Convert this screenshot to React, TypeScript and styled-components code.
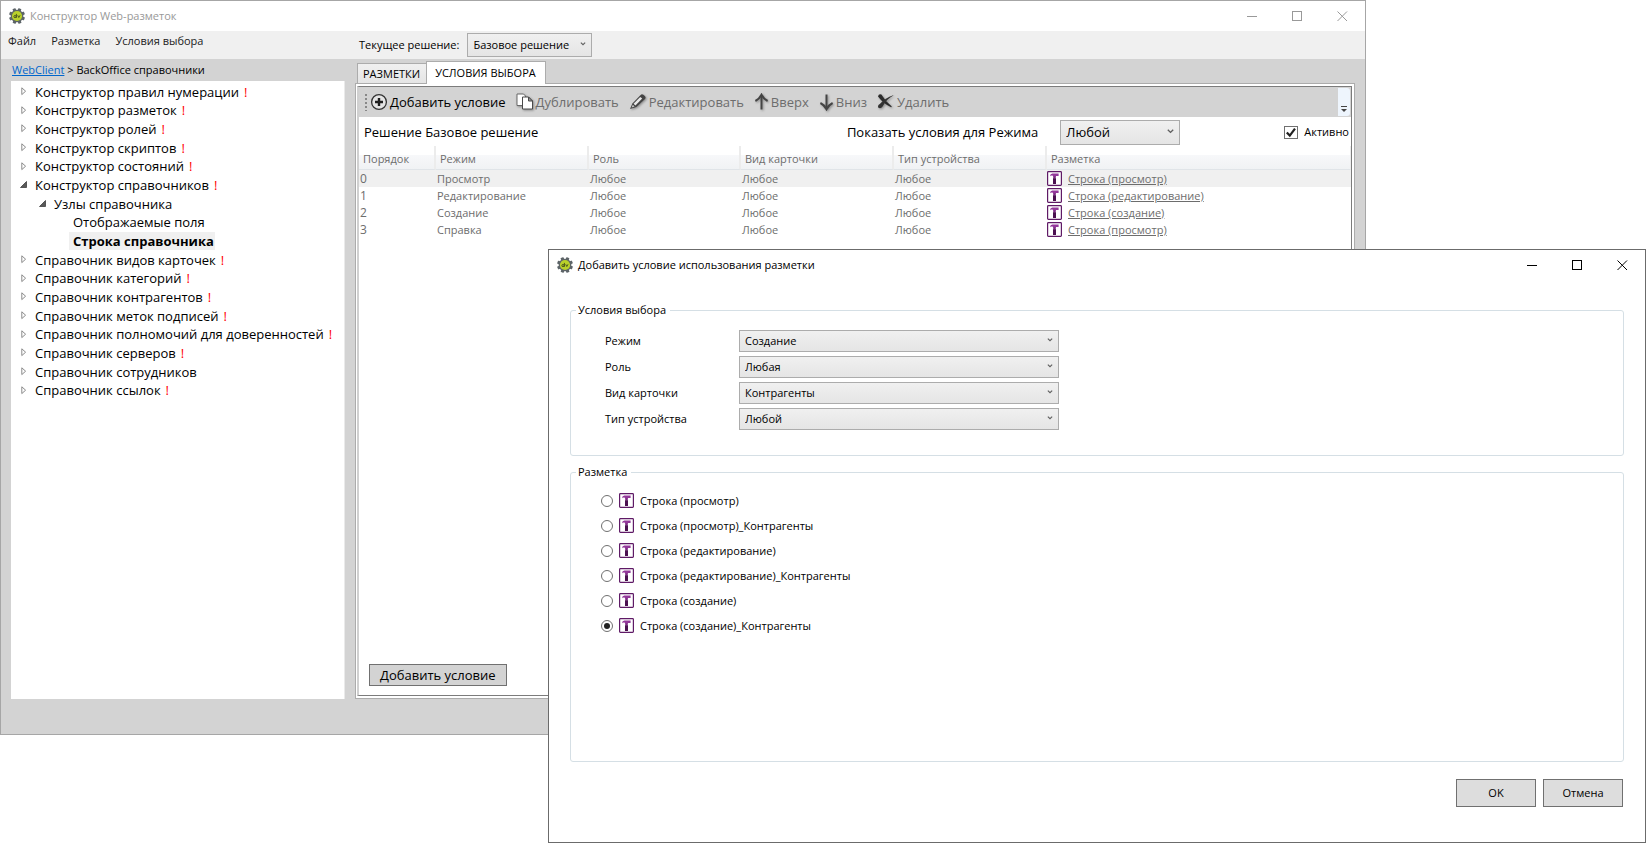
import React, { useState } from "react";
import styled, { createGlobalStyle, css } from "styled-components";

const GlobalStyle = createGlobalStyle`
  *, *::before, *::after { box-sizing: border-box; }
  html, body { margin: 0; background: #fff; }
  body, button, select, input {
    font-family: "Open Sans", "Noto Sans", sans-serif;
    font-size: 11px;
    line-height: 16px;
    color: #000;
  }
  button { margin: 0; padding: 0; border: 0; background: none; white-space: nowrap; }
  svg { display: block; flex: none; }
`;

/* ---------- desktop and windows ---------- */

const Desktop = styled.div`
  position: relative;
  height: 100vh;
  min-height: 720px;
  overflow: hidden;
`;

const Window = styled.section`
  position: absolute;
  display: flex;
  flex-direction: column;
  background: #fff;
`;

const MainWindow = styled(Window)`
  inset: 0 281px 108px 0;
  border: 1px solid #a6a6a6;
`;

const DialogWindow = styled(Window)`
  inset: 249px 1px 0 548px;
  border: 1px solid #6b6b6b;
`;

const TitleBar = styled.header<{ $inactive?: boolean }>`
  display: flex;
  align-items: center;
  flex: none;
  height: 30px;
  padding-left: 8px;
  gap: 5px;
  color: ${(p) => (p.$inactive ? "#999" : "#000")};
`;

const Title = styled.h1`
  flex: 1;
  margin: 0;
  font-size: inherit;
  font-weight: 400;
  white-space: nowrap;
`;

const CaptionGroup = styled.div`
  display: flex;
  color: inherit;
`;

const CaptionButton = styled.button`
  display: grid;
  place-items: center;
  width: 45px;
  height: 28px;
  color: inherit;
`;

const MenuBar = styled.div`
  display: flex;
  align-items: center;
  flex: none;
  height: 28px;
  background: #f0f0f0;
`;

const Menus = styled.nav`
  display: flex;
  align-self: flex-start;
  gap: 15px;
  width: 358px;
  height: 20px;
  padding-left: 7px;
`;

const MenuButton = styled.button`
  height: 20px;
  color: #212121;
`;

const Field = styled.div`
  display: flex;
  align-items: center;
  gap: 8px;
`;

/* ---------- drop-downs ---------- */

const SelectBox = styled.span<{ $width: number }>`
  display: grid;
  width: ${(p) => p.$width}px;
`;

const SelectInput = styled.select<{ $height: number; $large?: boolean }>`
  grid-area: 1 / 1;
  appearance: none;
  height: ${(p) => p.$height}px;
  padding: 0 20px 0 5px;
  border: 1px solid #acacac;
  border-radius: 0;
  background: linear-gradient(#f0f0f0, #e5e5e5);
  font-size: ${(p) => (p.$large ? 13 : 11)}px;
`;

const SelectArrow = styled.svg`
  grid-area: 1 / 1;
  place-self: center end;
  margin: 0 6px 2px 0;
  pointer-events: none;
`;

/* ---------- main window body ---------- */

const Workspace = styled.div`
  display: flex;
  flex: 1;
  min-height: 0;
  gap: 10px;
  padding: 0 10px 35px;
  background: #d3d3d3;
`;

const SidePane = styled.aside`
  display: flex;
  flex-direction: column;
  flex: none;
  width: 334px;
`;

const Breadcrumb = styled.nav`
  flex: none;
  height: 22px;
  padding-left: 1px;
  line-height: 22px;
  word-spacing: normal;
  a { color: #0066cc; }
`;

const Tree = styled.ul`
  flex: 1;
  margin: 0;
  padding: 1px 0 0;
  list-style: none;
  background: #fff;
  border-right: 1px solid #eaeaea;
`;

const TreeRow = styled.li<{ $level: number }>`
  display: flex;
  align-items: center;
  height: 19px;
  padding-left: ${(p) => p.$level * 19}px;
  font-size: 13px;
  line-height: 18px;
  white-space: nowrap;
  &:nth-child(3n + 2) { height: 18px; }
`;

const TreeToggle = styled.button`
  display: flex;
  align-items: center;
  justify-content: flex-end;
  width: 20px;
  height: 16px;
  padding-right: 4px;
`;

const TreeSpacer = styled.span`
  width: 20px;
`;

const TreeLabel = styled.span<{ $selected?: boolean }>`
  padding: 0 1px 0 4px;
  ${(p) => p.$selected && css`
    background: #f0f0f0;
    font-weight: 700;
  `}
`;

const Alert = styled.span`
  margin-left: 4px;
  color: #f00;
`;

const MainPane = styled.main`
  display: flex;
  flex-direction: column;
  flex: 1;
  min-width: 0;
  padding-top: 2px;
`;

const TabList = styled.div`
  display: flex;
  align-items: flex-end;
  flex: none;
  height: 22px;
  padding-left: 2px;
`;

const Tab = styled.button<{ $active?: boolean }>`
  height: 20px;
  padding: 0 6px 0 5px;
  border: 1px solid #acacac;
  border-width: 1px 0 0 1px;
  background: linear-gradient(#f0f0f0, #e5e5e5);
  ${(p) => p.$active && css`
    position: relative;
    height: 23px;
    margin-bottom: -1px;
    padding: 0 9px 0 8px;
    border-width: 1px 1px 0;
    background: #fff;
  `}
`;

const TabPanel = styled.div`
  display: flex;
  flex: 1;
  min-height: 0;
  padding: 2px 2px 2px 1px;
  border: 1px solid #acacac;
  background: #fff;
`;

const Frame = styled.div`
  display: flex;
  flex-direction: column;
  flex: 1;
  min-width: 0;
  border: 1px solid #7c7c7c;
  border-left: 2px solid #d0d0d0;
`;

const Toolbar = styled.div`
  display: flex;
  align-items: center;
  flex: none;
  height: 30px;
  gap: 10px;
  padding: 1px 1px 1px 6px;
  background: #d3d3d3;
`;

const ToolButton = styled.button`
  display: flex;
  align-items: center;
  gap: 2px;
  font-size: 13px;
  line-height: 18px;
  &:disabled { color: #6d6d6d; }
`;

const Grip = styled.span`
  width: 2px;
  height: 17px;
  margin-right: -7px;
  background: repeating-linear-gradient(#888 0 2px, transparent 2px 4px);
`;

const Overflow = styled.button`
  display: flex;
  align-items: flex-end;
  justify-content: center;
  align-self: stretch;
  width: 12px;
  margin-left: auto;
  padding-bottom: 4px;
  border-radius: 0 3px 3px 0;
  background: #eef5fd;
`;

const FilterRow = styled.div`
  display: flex;
  align-items: center;
  flex: none;
  height: 29px;
  padding: 1px 2px 0 5px;
  font-size: 13px;
`;

const FilterField = styled.div`
  display: flex;
  align-items: center;
  gap: 22px;
  margin-right: 104px;
`;

const SolutionName = styled.span`
  flex: 1;
`;

const CheckLabel = styled.label`
  display: flex;
  align-items: center;
  gap: 6px;
  font-size: 11px;
`;

const Checkbox = styled.input`
  appearance: none;
  width: 14px;
  height: 13px;
  margin: 0;
  border: 1px solid #707070;
  background: #fff;
  &:checked {
    background: #fff url("data:image/svg+xml,%3Csvg xmlns='http://www.w3.org/2000/svg' viewBox='0 0 12 11'%3E%3Cpath d='M1.8 5.4L4.8 8.6L10 1.6' fill='none' stroke='%23212121' stroke-width='2.2'/%3E%3C/svg%3E") center / 12px 11px no-repeat;
  }
`;

/* ---------- conditions table ---------- */

const Table = styled.table`
  width: 100%;
  table-layout: fixed;
  border-collapse: separate;
  border-spacing: 0;
  color: #6d6d6d;
  line-height: 16px;
`;

const Col = styled.col<{ $width?: number }>`
  width: ${(p) => (p.$width ? `${p.$width}px` : "auto")};
`;

const HeadCell = styled.th`
  height: 24px;
  padding: 2px 0 0 4px;
  border-right: 2px solid #ececec;
  border-bottom: 1px solid #e0e4e8;
  background: linear-gradient(#fff 0 9px, #f7f8fa 9px, #f0f2f4);
  font-weight: 400;
  text-align: left;
  &:last-child { border-right-width: 1px; }
`;

const BodyRow = styled.tr<{ $selected?: boolean }>`
  background: ${(p) => (p.$selected ? "#f0f0f0" : "#fff")};
`;

const Cell = styled.td`
  height: 17px;
  padding: 0 0 0 1px;
`;

const OrderCell = styled(Cell)`
  font-size: 12px;
`;

const LayoutCell = styled(Cell)`
  padding-left: 0;
`;

const LayoutRef = styled.span`
  display: flex;
  align-items: center;
  gap: 5px;
  a { color: inherit; }
`;

const AddButton = styled.button`
  align-self: flex-start;
  flex: none;
  height: 22px;
  margin: auto 0 9px 10px;
  padding: 0 10px;
  border: 1px solid #707070;
  background: #d3d3d3;
  font-size: 13px;
  line-height: 18px;
`;

/* ---------- dialog ---------- */

const DialogBody = styled.form`
  display: flex;
  flex-direction: column;
  flex: 1;
  min-height: 0;
  gap: 8px;
  padding: 22px 21px 35px;
`;

const Group = styled.fieldset<{ $grow?: boolean }>`
  flex: ${(p) => (p.$grow ? "1" : "none")};
  min-width: 0;
  margin: 0;
  padding: 0;
  border: 1px solid #d5dfe5;
  border-radius: 3px;
`;

const Legend = styled.legend`
  margin-left: 5px;
  padding: 0 4px 0 2px;
`;

const FormGrid = styled.div`
  display: grid;
  grid-template-columns: 134px auto;
  justify-content: start;
  align-items: center;
  row-gap: 4px;
  padding: 12px 0 25px 34px;
`;

const RadioList = styled.div`
  padding: 9px 0 0 30px;
`;

const RadioRow = styled.label`
  display: flex;
  align-items: center;
  height: 25px;
  padding-bottom: 1px;
`;

const Radio = styled.input`
  appearance: none;
  display: grid;
  place-items: center;
  width: 12px;
  height: 12px;
  margin: 0 6px 0 0;
  border: 1px solid #707070;
  border-radius: 50%;
  background: #fff;
  &:checked::before {
    content: "";
    width: 6px;
    height: 6px;
    border-radius: 50%;
    background: #212121;
  }
`;

const RadioText = styled.span`
  padding-left: 5px;
`;

const DialogActions = styled.div`
  display: flex;
  justify-content: flex-end;
  gap: 7px;
  padding: 9px 1px 0 0;
`;

const PushButton = styled.button`
  width: 80px;
  height: 28px;
  border: 1px solid #707070;
  background: #ddd;
`;

/* ---------- drawings ---------- */

const gearTeeth = [0, 45, 90, 135, 180, 225, 270, 315];

const AppIcon = () => (
  <svg width="16" height="16" viewBox="0 0 16 16" aria-hidden="true">
    {gearTeeth.map((a) => (
      <rect key={a} x="6.4" y="0" width="3.2" height="4" rx="0.6" fill="#5d6468" transform={`rotate(${a + 22} 8 8)`} />
    ))}
    <circle cx="8" cy="8" r="6.3" fill="#5d6468" />
    <circle cx="8" cy="8" r="5.1" fill="#b9d12a" />
    <circle cx="6" cy="8.6" r="1.1" fill="none" stroke="#3d4a1c" strokeWidth="0.9" />
    <path d="M7.4 5.9V9.8M8.7 7.3L9.8 9.5L11 7.3" fill="none" stroke="#3d4a1c" strokeWidth="0.9" />
  </svg>
);

const MinimizeIcon = () => (
  <svg width="11" height="11" viewBox="0 0 11 11" aria-hidden="true">
    <path d="M0 5.5H10" stroke="currentColor" />
  </svg>
);

const MaximizeIcon = () => (
  <svg width="11" height="11" viewBox="0 0 11 11" aria-hidden="true">
    <rect x="0.5" y="0.5" width="9" height="9" fill="none" stroke="currentColor" />
  </svg>
);

const CloseIcon = () => (
  <svg width="11" height="11" viewBox="0 0 11 11" aria-hidden="true">
    <path d="M0.5 0.5L10 10M10 0.5L0.5 10" stroke="currentColor" />
  </svg>
);

const CollapsedIcon = () => (
  <svg width="6" height="9" viewBox="0 0 6 9" aria-hidden="true">
    <path d="M0.8 0.8V7.6L4.6 4.2Z" fill="#fff" stroke="#8a8a8a" />
  </svg>
);

const ExpandedIcon = () => (
  <svg width="7" height="7" viewBox="0 0 7 7" aria-hidden="true">
    <path d="M6.5 0.5V6.5H0.5Z" fill="#595959" stroke="#404040" strokeWidth="0.8" />
  </svg>
);

const Shaded = styled.svg`
  filter: drop-shadow(1px 1px 1px rgba(0, 0, 0, 0.35));
`;

const AddIcon = () => (
  <svg width="18" height="18" viewBox="0 0 18 18" aria-hidden="true">
    <circle cx="9" cy="9" r="7.4" fill="#e4e4e4" stroke="#333" strokeWidth="1.3" />
    <path d="M9 5V13M5 9H13" stroke="#1e1e1e" strokeWidth="2.4" />
  </svg>
);

const DuplicateIcon = () => (
  <Shaded width="18" height="18" viewBox="0 0 18 18" aria-hidden="true">
    <path d="M1 1H7.5L9.5 3V12.5H1Z" fill="#fff" stroke="#6a6a6a" />
    <path d="M6.5 4H12.5L16.5 8V16H6.5Z" fill="#fff" stroke="#4a4a4a" />
    <path d="M12.5 4V8H16.5Z" fill="#999" stroke="#4a4a4a" />
  </Shaded>
);

const PencilIcon = () => (
  <Shaded width="18" height="18" viewBox="0 0 18 18" aria-hidden="true">
    <path d="M1 16L3.4 10.4L11.6 2Q12.8 0.8 14.4 1.8L16 3.2Q17.2 4.6 16 6L7.4 14Z" fill="#444" />
    <path d="M4.6 10.8L11.2 4L13.2 5.6L6.4 12.4Z" fill="#e8e8e8" />
    <path d="M2.6 14.4L3.8 11.8L5.6 13.4Z" fill="#ccc" />
  </Shaded>
);

const ArrowIcon = ({ down }: { down?: boolean }) => (
  <Shaded width="15" height="18" viewBox="0 0 15 18" aria-hidden="true">
    <g transform={down ? "rotate(180 7.5 9)" : undefined} fill="none" stroke="#444">
      <path d="M7.5 2V16.5" strokeWidth="2" />
      <path d="M1.4 8Q5.4 6 7.5 1.8Q9.6 6 13.6 8" strokeWidth="2" />
    </g>
  </Shaded>
);

const DeleteIcon = () => (
  <Shaded width="18" height="18" viewBox="0 0 18 18" aria-hidden="true">
    <path d="M1 3.4Q1.8 0.4 4.4 1.6Q8.2 8.4 14.8 13.6L14.2 14.2Q6.4 10.6 1 3.4Z" fill="#2b2b2b" />
    <path d="M16.4 2.6Q9.8 5.8 5.6 13.6Q3.6 16.2 1.2 14.6Q0.4 12.2 2.8 11Q8.4 4.6 16.2 2.2Z" fill="#333" />
  </Shaded>
);

const OverflowIcon = () => (
  <svg width="6" height="6" viewBox="0 0 6 6" aria-hidden="true">
    <path d="M0 0.5H6" stroke="#444" />
    <path d="M0 3H6L3 6Z" fill="#444" />
  </svg>
);

const LayoutIcon = () => (
  <svg width="16" height="16" viewBox="0 0 16 16" aria-hidden="true">
    <rect x="0.6" y="0.6" width="13.8" height="13.8" rx="0.8" fill="#fff" stroke="#5f1a66" strokeWidth="1.2" />
    <path d="M3 5.2Q3.2 2.6 5.4 2.6H11.6V5H9L8.6 6.8H6.4L6 4.8Q4.4 4 3 5.2Z" fill="#93389a" />
    <path d="M6.4 5.4H8.6V7.4H6.4Z" fill="#7a2b80" />
    <path d="M6 7.2H9V13H6Z" fill="#4b1050" />
  </svg>
);

/* ---------- composed parts ---------- */

const CaptionButtons = () => (
  <CaptionGroup>
    <CaptionButton aria-label="Свернуть"><MinimizeIcon /></CaptionButton>
    <CaptionButton aria-label="Развернуть"><MaximizeIcon /></CaptionButton>
    <CaptionButton aria-label="Закрыть"><CloseIcon /></CaptionButton>
  </CaptionGroup>
);

type DropDownProps = { id: string; value: string; width: number; height: number; large?: boolean };

const DropDown = ({ id, value, width, height, large }: DropDownProps) => (
  <SelectBox $width={width}>
    <SelectInput id={id} $height={height} $large={large} defaultValue={value}>
      <option>{value}</option>
    </SelectInput>
    <SelectArrow width={large ? 7 : 6} height={large ? 5 : 4} viewBox="0 0 7 5" aria-hidden="true">
      <path d="M0.8 0.8L3.5 3.4L6.2 0.8" fill="none" stroke="#606060" strokeWidth="1.4" />
    </SelectArrow>
  </SelectBox>
);

type Node = { text: string; level?: number; state?: "open" | "closed"; alert?: boolean; selected?: boolean };

const nodes: Node[] = [
  { text: "Конструктор правил нумерации", state: "closed", alert: true },
  { text: "Конструктор разметок", state: "closed", alert: true },
  { text: "Конструктор ролей", state: "closed", alert: true },
  { text: "Конструктор скриптов", state: "closed", alert: true },
  { text: "Конструктор состояний", state: "closed", alert: true },
  { text: "Конструктор справочников", state: "open", alert: true },
  { text: "Узлы справочника", level: 1, state: "open" },
  { text: "Отображаемые поля", level: 2 },
  { text: "Строка справочника", level: 2, selected: true },
  { text: "Справочник видов карточек", state: "closed", alert: true },
  { text: "Справочник категорий", state: "closed", alert: true },
  { text: "Справочник контрагентов", state: "closed", alert: true },
  { text: "Справочник меток подписей", state: "closed", alert: true },
  { text: "Справочник полномочий для доверенностей", state: "closed", alert: true },
  { text: "Справочник серверов", state: "closed", alert: true },
  { text: "Справочник сотрудников", state: "closed" },
  { text: "Справочник ссылок", state: "closed", alert: true },
];

const conditions = [
  ["0", "Просмотр", "Строка (просмотр)"],
  ["1", "Редактирование", "Строка (редактирование)"],
  ["2", "Создание", "Строка (создание)"],
  ["3", "Справка", "Строка (просмотр)"],
];

const criteria = [
  ["mode", "Режим", "Создание"],
  ["role", "Роль", "Любая"],
  ["kind", "Вид карточки", "Контрагенты"],
  ["device", "Тип устройства", "Любой"],
];

const layouts = [
  "Строка (просмотр)",
  "Строка (просмотр)_Контрагенты",
  "Строка (редактирование)",
  "Строка (редактирование)_Контрагенты",
  "Строка (создание)",
  "Строка (создание)_Контрагенты",
];

const Designer = () => (
  <MainWindow aria-label="Конструктор Web-разметок">
    <TitleBar $inactive>
      <AppIcon />
      <Title>Конструктор Web-разметок</Title>
      <CaptionButtons />
    </TitleBar>
    <MenuBar>
      <Menus>
        <MenuButton>Файл</MenuButton>
        <MenuButton>Разметка</MenuButton>
        <MenuButton>Условия выбора</MenuButton>
      </Menus>
      <Field>
        <label htmlFor="solution">Текущее решение:</label>
        <DropDown id="solution" value="Базовое решение" width={125} height={24} />
      </Field>
    </MenuBar>
    <Workspace>
      <SidePane>
        <Breadcrumb>
          <a href="#webclient">WebClient</a> &gt; BackOffice справочники
        </Breadcrumb>
        <Tree role="tree">
          {nodes.map((n) => (
            <TreeRow key={n.text} role="treeitem" aria-level={(n.level ?? 0) + 1} aria-selected={!!n.selected} $level={n.level ?? 0}>
              {n.state ? (
                <TreeToggle aria-label={n.text}>
                  {n.state === "open" ? <ExpandedIcon /> : <CollapsedIcon />}
                </TreeToggle>
              ) : (
                <TreeSpacer />
              )}
              <TreeLabel $selected={n.selected}>{n.text}</TreeLabel>
              {n.alert && <Alert>!</Alert>}
            </TreeRow>
          ))}
        </Tree>
      </SidePane>
      <MainPane>
        <TabList role="tablist">
          <Tab role="tab" aria-selected={false}>РАЗМЕТКИ</Tab>
          <Tab role="tab" aria-selected $active>УСЛОВИЯ ВЫБОРА</Tab>
        </TabList>
        <TabPanel role="tabpanel">
          <Frame>
            <Toolbar role="toolbar">
              <Grip />
              <ToolButton><AddIcon />Добавить условие</ToolButton>
              <ToolButton disabled><DuplicateIcon />Дублировать</ToolButton>
              <ToolButton disabled><PencilIcon />Редактировать</ToolButton>
              <ToolButton disabled><ArrowIcon />Вверх</ToolButton>
              <ToolButton disabled><ArrowIcon down />Вниз</ToolButton>
              <ToolButton disabled><DeleteIcon />Удалить</ToolButton>
              <Overflow aria-label="Ещё"><OverflowIcon /></Overflow>
            </Toolbar>
            <FilterRow>
              <SolutionName>Решение Базовое решение</SolutionName>
              <FilterField>
                <label htmlFor="filter">Показать условия для Режима</label>
                <DropDown id="filter" value="Любой" width={120} height={25} large />
              </FilterField>
              <CheckLabel>
                <Checkbox type="checkbox" defaultChecked />
                Активно
              </CheckLabel>
            </FilterRow>
            <Table>
              <colgroup>
                <Col $width={77} />
                <Col $width={153} />
                <Col $width={152} />
                <Col $width={153} />
                <Col $width={153} />
                <Col />
              </colgroup>
              <thead>
                <tr>
                  {["Порядок", "Режим", "Роль", "Вид карточки", "Тип устройства", "Разметка"].map((h) => (
                    <HeadCell key={h} scope="col">{h}</HeadCell>
                  ))}
                </tr>
              </thead>
              <tbody>
                {conditions.map(([order, mode, layout], i) => (
                  <BodyRow key={order} $selected={i === 0}>
                    <OrderCell>{order}</OrderCell>
                    <Cell>{mode}</Cell>
                    <Cell>Любое</Cell>
                    <Cell>Любое</Cell>
                    <Cell>Любое</Cell>
                    <LayoutCell>
                      <LayoutRef>
                        <LayoutIcon />
                        <a href="#layout">{layout}</a>
                      </LayoutRef>
                    </LayoutCell>
                  </BodyRow>
                ))}
              </tbody>
            </Table>
            <AddButton>Добавить условие</AddButton>
          </Frame>
        </TabPanel>
      </MainPane>
    </Workspace>
  </MainWindow>
);

const ConditionDialog = () => {
  const [chosen, setChosen] = useState(layouts[5]);
  return (
    <DialogWindow role="dialog" aria-label="Добавить условие использования разметки">
      <TitleBar>
        <AppIcon />
        <Title>Добавить условие использования разметки</Title>
        <CaptionButtons />
      </TitleBar>
      <DialogBody>
        <Group>
          <Legend>Условия выбора</Legend>
          <FormGrid>
            {criteria.map(([id, label, value]) => (
              <React.Fragment key={id}>
                <label htmlFor={id}>{label}</label>
                <DropDown id={id} value={value} width={320} height={22} />
              </React.Fragment>
            ))}
          </FormGrid>
        </Group>
        <Group $grow>
          <Legend>Разметка</Legend>
          <RadioList>
            {layouts.map((name) => (
              <RadioRow key={name}>
                <Radio type="radio" name="layout" checked={chosen === name} onChange={() => setChosen(name)} />
                <LayoutIcon />
                <RadioText>{name}</RadioText>
              </RadioRow>
            ))}
          </RadioList>
        </Group>
        <DialogActions>
          <PushButton type="button">OK</PushButton>
          <PushButton type="button">Отмена</PushButton>
        </DialogActions>
      </DialogBody>
    </DialogWindow>
  );
};

export default function App() {
  return (
    <Desktop>
      <GlobalStyle />
      <Designer />
      <ConditionDialog />
    </Desktop>
  );
}
